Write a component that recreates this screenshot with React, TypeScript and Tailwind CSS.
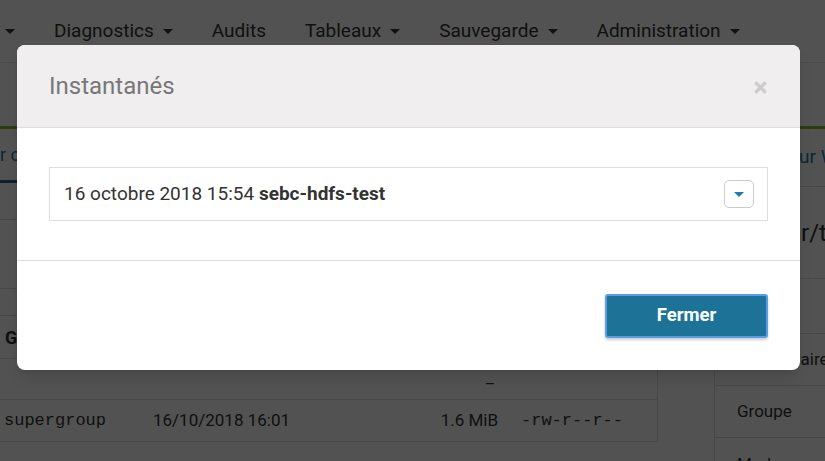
import { X } from "lucide-react";

const Caret = () => (
  <span className="ml-[9px] inline-block h-0 w-0 border-x-[5px] border-t-[5px] border-x-transparent border-t-current align-middle" />
);

const NavItem = (props: { label: string; caret?: boolean }) => (
  <span className="flex items-center text-[19px] text-[#333]">
    {props.label}
    {props.caret && <Caret />}
  </span>
);

const Background = () => (
  <div className="h-[461px] w-[825px] overflow-hidden bg-white font-['Roboto',sans-serif] text-[#333]">
    <div className="flex h-[63px] items-center gap-[39px] border-b border-[#e5e5e5]">
      <span className="-ml-[4px] text-[#333]">
        <Caret />
      </span>
      <NavItem label="Diagnostics" caret />
      <NavItem label="Audits" />
      <NavItem label="Tableaux" caret />
      <NavItem label="Sauvegarde" caret />
      <NavItem label="Administration" caret />
    </div>
    <div className="h-[66px] border-b-[3px] border-[#8cb832]" />
    <div className="flex">
      <div className="w-[658px] shrink-0">
        <div className="h-[91px] border-b border-[#ddd]">
          <div className="flex h-[54px] w-[40px] items-center whitespace-nowrap border-b-[3px] border-[#236f92] text-[18px] text-[#1a7fb0]">
            r c
          </div>
        </div>
        <div className="h-[69px] border-b border-[#ddd]" />
        <div className="border-r border-[#ddd]">
          <div className="h-[27px] border-b border-[#ddd]" />
          <div className="flex h-[43px] items-center border-b border-[#ddd] pl-[5px] text-[18px] font-bold">
            G
          </div>
          <div className="relative h-[41px] border-b border-[#ddd]">
            <span className="absolute left-[486px] top-[6px] text-[17px]">_</span>
          </div>
          <div className="flex h-[42px] items-center border-b border-[#ddd] text-[17px]">
            <span className="w-[153px] pl-[4px] font-['Liberation_Mono',monospace] text-[17px]">supergroup</span>
            <span className="w-[199px]">16/10/2018 16:01</span>
            <span className="w-[146px] text-right">1.6 MiB</span>
            <span className="pl-[23px] font-['Liberation_Mono',monospace] text-[17px]">-rw-r--r--</span>
          </div>
        </div>
      </div>
      <div className="ml-[56px] min-w-0 flex-1 overflow-hidden whitespace-nowrap border-l border-[#ddd] text-[17px]">
        <div className="flex h-[57px] items-center pl-[84px] text-[19px] text-[#1a7fb0]">ur W</div>
        <div className="flex h-[92px] items-center border-t border-[#ddd] pl-[86px] text-[24px]">r/ta</div>
        <div className="h-[55px] border-t border-[#ddd]" />
        <div className="flex h-[52px] items-center border-t border-[#ddd] pl-[80px]">taire</div>
        <div className="flex h-[52px] items-center border-t border-[#ddd] pl-[22px]">Groupe</div>
        <div className="flex h-[52px] items-start border-t border-[#ddd] pl-[22px] pt-[14px]">Mode</div>
      </div>
    </div>
  </div>
);

export default function App() {
  return (
    <div className="relative h-[461px] w-[825px] overflow-hidden">
      <Background />
      <div className="absolute inset-0 bg-black/[0.68]" />
      <div className="absolute left-[17px] top-[45px] w-[783px] overflow-hidden rounded-[8px] bg-white font-['Roboto',sans-serif] shadow-lg">
        <div className="flex h-[83px] items-center justify-between border-b border-[#dddddd] bg-[#f0eeef] pl-[32px] pr-[31px]">
          <h4 className="text-[24px] text-[#777]">Instantanés</h4>
          <X className="mt-[2px] h-[17px] w-[17px] text-[#cccccc]" strokeWidth={4.5} />
        </div>
        <div className="border-b border-[#dddddd] px-[32px] py-[39px]">
          <div className="flex h-[54px] items-center justify-between border border-[#dddddd] pl-[14px] pr-[13px] text-[19px] text-[#333]">
            <span>
              16 octobre 2018 15:54 <span className="font-bold">sebc-hdfs-test</span>
            </span>
            <span className="flex h-[28px] w-[30px] items-center justify-center rounded-[5px] border border-[#cccccc] text-[#1a7fb0]">
              <span className="inline-block h-0 w-0 border-x-[5px] border-t-[5px] border-x-transparent border-t-current" />
            </span>
          </div>
        </div>
        <div className="flex justify-end px-[32px] pb-[32px] pt-[33px]">
          <button className="h-[44px] w-[163px] rounded-[3px] border-2 border-[#5a9ce8] bg-[#1d7397] text-[18.5px] font-bold text-white shadow-[0_2px_3px_rgba(0,0,0,0.2)]">
            Fermer
          </button>
        </div>
      </div>
    </div>
  );
}
